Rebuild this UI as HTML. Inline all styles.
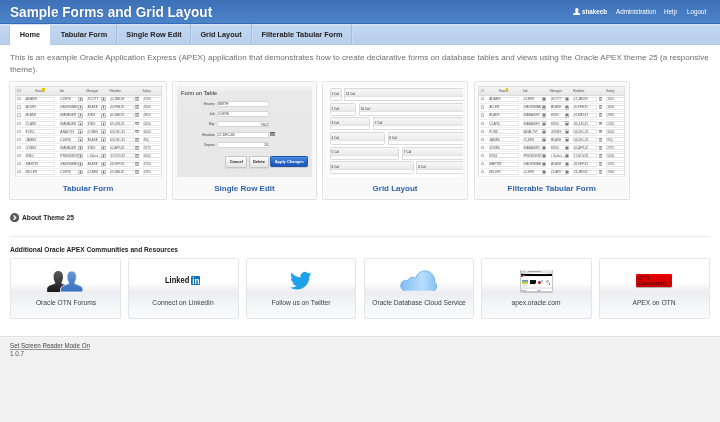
<!DOCTYPE html>
<html><head><meta charset="utf-8"><style>
html,body{margin:0;padding:0;width:720px;height:422px;overflow:hidden;background:#fff;}
body{position:relative;font-family:"Liberation Sans",sans-serif;}
.t{position:absolute;white-space:nowrap;}
.r{position:absolute;}
#w{position:absolute;left:0;top:0;width:720px;height:422px;will-change:transform;}
</style></head><body>
<div id="w"><div class="r" style="left:0px;top:0px;width:720px;height:23px;background:linear-gradient(#3d71b7,#4c83c9);"></div>
<div class="r" style="left:0px;top:23px;width:720px;height:1px;background:#356ab6;"></div>
<div class="t" style="left:10.00px;top:5px;font-size:14.5px;line-height:14.5px;color:#fff;font-weight:700;transform:scaleX(0.94);transform-origin:0 0;text-shadow:0 0 1px rgba(20,60,130,0.9);">Sample Forms and Grid Layout</div>
<svg class="r" style="left:572.7px;top:7.7px" width="7.7" height="7.6" viewBox="0 0 22.4 21" preserveAspectRatio="none"><path d="M11.2 0 C14.5 0 15.9 2.6 15.9 5.6 C15.9 7.6 15.5 9.2 14.9 10.4 C14.4 11.4 14.1 12 14.2 12.6 C17.4 13.6 22.4 15.2 22.4 18.2 L22.4 21 L0 21 L0 18.2 C0 15.2 5 13.6 8.2 12.6 C8.3 12 8 11.4 7.5 10.4 C6.9 9.2 6.5 7.6 6.5 5.6 C6.5 2.6 7.9 0 11.2 0 Z" fill="#fff"/></svg>
<div class="t" style="left:582.20px;top:8px;font-size:7px;line-height:7px;color:#fff;font-weight:700;transform:scaleX(0.89);transform-origin:0 0;">shakeeb</div>
<div class="t" style="left:616.00px;top:8px;font-size:7px;line-height:7px;color:#fff;font-weight:400;transform:scaleX(0.9);transform-origin:0 0;">Administration</div>
<div class="t" style="left:664.40px;top:8px;font-size:7px;line-height:7px;color:#fff;font-weight:400;transform:scaleX(0.9);transform-origin:0 0;">Help</div>
<div class="t" style="left:686.70px;top:8px;font-size:7px;line-height:7px;color:#fff;font-weight:400;transform:scaleX(0.9);transform-origin:0 0;">Logout</div>
<div class="r" style="left:0px;top:24px;width:720px;height:21px;background:linear-gradient(#d5e3f5 0,#d5e3f5 1px,#c2d6ef 2px,#b9cfeb 93%,#aec4e5 100%);"></div>
<div class="r" style="left:9px;top:25px;width:41px;height:20px;background:#fff;border-left:1px solid #afc4e3;box-sizing:border-box;"></div>
<div class="t" style="left:-70.00px;width:200px;text-align:center;top:31px;font-size:7.7px;line-height:7.7px;color:#222;font-weight:700;transform:scaleX(0.955);transform-origin:50% 0;">Home</div>
<div class="r" style="left:116px;top:24px;width:1px;height:20px;background:#a6bddd;"></div>
<div class="r" style="left:117px;top:25px;width:1px;height:19px;background:#c9dbf2;"></div>
<div class="t" style="left:-16.50px;width:200px;text-align:center;top:31px;font-size:7.7px;line-height:7.7px;color:#222;font-weight:700;transform:scaleX(0.955);transform-origin:50% 0;">Tabular Form</div>
<div class="r" style="left:190px;top:24px;width:1px;height:20px;background:#a6bddd;"></div>
<div class="r" style="left:191px;top:25px;width:1px;height:19px;background:#c9dbf2;"></div>
<div class="t" style="left:53.50px;width:200px;text-align:center;top:31px;font-size:7.7px;line-height:7.7px;color:#222;font-weight:700;transform:scaleX(0.955);transform-origin:50% 0;">Single Row Edit</div>
<div class="r" style="left:251px;top:24px;width:1px;height:20px;background:#a6bddd;"></div>
<div class="r" style="left:252px;top:25px;width:1px;height:19px;background:#c9dbf2;"></div>
<div class="t" style="left:121.00px;width:200px;text-align:center;top:31px;font-size:7.7px;line-height:7.7px;color:#222;font-weight:700;transform:scaleX(0.955);transform-origin:50% 0;">Grid Layout</div>
<div class="r" style="left:351px;top:24px;width:1px;height:20px;background:#a6bddd;"></div>
<div class="r" style="left:352px;top:25px;width:1px;height:19px;background:#c9dbf2;"></div>
<div class="t" style="left:201.50px;width:200px;text-align:center;top:31px;font-size:7.7px;line-height:7.7px;color:#222;font-weight:700;transform:scaleX(0.955);transform-origin:50% 0;">Filterable Tabular Form</div>
<div class="t" style="white-space:normal;left:10px;top:52px;width:705px;font-size:8.1px;line-height:11.6px;color:#6e6e6e;">This is an example Oracle Application Express (APEX) application that demonstrates how to create declarative forms on database tables and views using the Oracle APEX theme 25 (a responsive theme).</div>
<div class="r" style="left:9px;top:81px;width:158px;height:119px;background:#f9f9f9;border:1px solid #e2e2e2;border-radius:2px;box-sizing:border-box;box-shadow:inset 0 0 0 1px #fdfdfd;"></div>
<div class="t" style="left:-12.00px;width:200px;text-align:center;top:185px;font-size:8px;line-height:8px;color:#2f63ad;font-weight:700;">Tabular Form</div>
<div class="r" style="left:172px;top:81px;width:145px;height:119px;background:#f9f9f9;border:1px solid #e2e2e2;border-radius:2px;box-sizing:border-box;box-shadow:inset 0 0 0 1px #fdfdfd;"></div>
<div class="t" style="left:144.50px;width:200px;text-align:center;top:185px;font-size:8px;line-height:8px;color:#2f63ad;font-weight:700;">Single Row Edit</div>
<div class="r" style="left:322px;top:81px;width:146px;height:119px;background:#f9f9f9;border:1px solid #e2e2e2;border-radius:2px;box-sizing:border-box;box-shadow:inset 0 0 0 1px #fdfdfd;"></div>
<div class="t" style="left:295.00px;width:200px;text-align:center;top:185px;font-size:8px;line-height:8px;color:#2f63ad;font-weight:700;">Grid Layout</div>
<div class="r" style="left:473.5px;top:81px;width:156.5px;height:119px;background:#f9f9f9;border:1px solid #e2e2e2;border-radius:2px;box-sizing:border-box;box-shadow:inset 0 0 0 1px #fdfdfd;"></div>
<div class="t" style="left:451.75px;width:200px;text-align:center;top:185px;font-size:8px;line-height:8px;color:#2f63ad;font-weight:700;">Filterable Tabular Form</div>
<div class="r" style="left:14.7px;top:86px;width:147.3px;height:90.6px;background:#fff;border:1px solid #e2e2e2;box-sizing:border-box;"></div>
<div class="r" style="left:15.7px;top:87px;width:145.3px;height:7.8px;background:linear-gradient(#f2f2f2,#e8e8e8);border-bottom:0.6px solid #dcdcdc;"></div>
<div class="r" style="left:17.4px;top:88.8px;width:3.5px;height:3.2px;background:linear-gradient(#fff,#eee);border:0.7px solid #c2c2c2;border-radius:0.6px;box-sizing:border-box;"></div>
<div class="t" style="left:35.40px;top:90px;font-size:3px;line-height:3px;color:#555;font-weight:400;">Ename</div>
<div class="t" style="left:59.20px;top:90px;font-size:3px;line-height:3px;color:#555;font-weight:400;">Job</div>
<div class="t" style="left:86.50px;top:90px;font-size:3px;line-height:3px;color:#555;font-weight:400;">Manager</div>
<div class="t" style="left:109.50px;top:90px;font-size:3px;line-height:3px;color:#555;font-weight:400;">Hiredate</div>
<div class="t" style="left:142.50px;top:90px;font-size:3px;line-height:3px;color:#555;font-weight:400;">Salary</div>
<div class="r" style="left:42.0px;top:88px;width:2.5px;height:2.5px;background:#e8c400;"></div>
<div class="r" style="left:15.7px;top:102.7px;width:145.3px;height:0.8px;background:#efefef;"></div>
<div class="r" style="left:17.4px;top:97.19999999999999px;width:3.5px;height:3.2px;background:linear-gradient(#fff,#eee);border:0.7px solid #c2c2c2;border-radius:0.6px;box-sizing:border-box;"></div>
<div class="r" style="left:25.0px;top:96.6px;width:30px;height:5px;background:#fff;border:0.6px solid #e4e4e4;box-sizing:border-box;"></div>
<div class="t" style="left:26.00px;top:98px;font-size:3.1px;line-height:3.1px;color:#555;font-weight:400;">ADAMS</div>
<div class="r" style="left:59.8px;top:96.6px;width:23px;height:5px;background:#fff;border:0.6px solid #e4e4e4;box-sizing:border-box;"></div>
<div class="t" style="left:60.60px;top:98px;font-size:3.1px;line-height:3.1px;color:#555;font-weight:400;">CLERK</div>
<div class="r" style="left:78.4px;top:96.8px;width:4.3px;height:4.6px;background:linear-gradient(#fafafa,#e6e6e6);border:0.6px solid #b8b8b8;border-radius:1px;box-sizing:border-box;"></div>
<div class="r" style="left:79.95px;top:98.19999999999999px;width:1.2px;height:2px;background:#7a7a7a;"></div>
<div class="r" style="left:87.0px;top:96.6px;width:18.7px;height:5px;background:#fff;border:0.6px solid #e4e4e4;box-sizing:border-box;"></div>
<div class="t" style="left:87.80px;top:98px;font-size:3.1px;line-height:3.1px;color:#555;font-weight:400;">SCOTT</div>
<div class="r" style="left:101.4px;top:96.8px;width:4.3px;height:4.6px;background:linear-gradient(#fafafa,#e6e6e6);border:0.6px solid #b8b8b8;border-radius:1px;box-sizing:border-box;"></div>
<div class="r" style="left:102.95px;top:98.19999999999999px;width:1.2px;height:2px;background:#7a7a7a;"></div>
<div class="r" style="left:109.5px;top:96.6px;width:24.3px;height:5px;background:#fff;border:0.6px solid #e4e4e4;box-sizing:border-box;"></div>
<div class="t" style="left:110.40px;top:98px;font-size:2.9px;line-height:2.9px;color:#555;font-weight:400;">12-JAN-83</div>
<div class="r" style="left:135.3px;top:97.19999999999999px;width:3.6px;height:3.8px;background:linear-gradient(#888 0,#888 35%,#ccc 36%,#aaa);"></div>
<div class="r" style="left:142.9px;top:96.6px;width:18.9px;height:5px;background:#fff;border:0.6px solid #e4e4e4;box-sizing:border-box;"></div>
<div class="t" style="left:143.80px;top:98px;font-size:3.1px;line-height:3.1px;color:#555;font-weight:400;">1100</div>
<div class="r" style="left:15.7px;top:110.82px;width:145.3px;height:0.8px;background:#efefef;"></div>
<div class="r" style="left:17.4px;top:105.32px;width:3.5px;height:3.2px;background:linear-gradient(#fff,#eee);border:0.7px solid #c2c2c2;border-radius:0.6px;box-sizing:border-box;"></div>
<div class="r" style="left:25.0px;top:104.72px;width:30px;height:5px;background:#fff;border:0.6px solid #e4e4e4;box-sizing:border-box;"></div>
<div class="t" style="left:26.00px;top:106px;font-size:3.1px;line-height:3.1px;color:#555;font-weight:400;">ALLEN</div>
<div class="r" style="left:59.8px;top:104.72px;width:23px;height:5px;background:#fff;border:0.6px solid #e4e4e4;box-sizing:border-box;"></div>
<div class="t" style="left:60.60px;top:106px;font-size:3.1px;line-height:3.1px;color:#555;font-weight:400;">SALESMAN</div>
<div class="r" style="left:78.4px;top:104.92px;width:4.3px;height:4.6px;background:linear-gradient(#fafafa,#e6e6e6);border:0.6px solid #b8b8b8;border-radius:1px;box-sizing:border-box;"></div>
<div class="r" style="left:79.95px;top:106.32px;width:1.2px;height:2px;background:#7a7a7a;"></div>
<div class="r" style="left:87.0px;top:104.72px;width:18.7px;height:5px;background:#fff;border:0.6px solid #e4e4e4;box-sizing:border-box;"></div>
<div class="t" style="left:87.80px;top:106px;font-size:3.1px;line-height:3.1px;color:#555;font-weight:400;">BLAKE</div>
<div class="r" style="left:101.4px;top:104.92px;width:4.3px;height:4.6px;background:linear-gradient(#fafafa,#e6e6e6);border:0.6px solid #b8b8b8;border-radius:1px;box-sizing:border-box;"></div>
<div class="r" style="left:102.95px;top:106.32px;width:1.2px;height:2px;background:#7a7a7a;"></div>
<div class="r" style="left:109.5px;top:104.72px;width:24.3px;height:5px;background:#fff;border:0.6px solid #e4e4e4;box-sizing:border-box;"></div>
<div class="t" style="left:110.40px;top:106px;font-size:2.9px;line-height:2.9px;color:#555;font-weight:400;">20-FEB-81</div>
<div class="r" style="left:135.3px;top:105.32px;width:3.6px;height:3.8px;background:linear-gradient(#888 0,#888 35%,#ccc 36%,#aaa);"></div>
<div class="r" style="left:142.9px;top:104.72px;width:18.9px;height:5px;background:#fff;border:0.6px solid #e4e4e4;box-sizing:border-box;"></div>
<div class="t" style="left:143.80px;top:106px;font-size:3.1px;line-height:3.1px;color:#555;font-weight:400;">1600</div>
<div class="r" style="left:15.7px;top:118.94px;width:145.3px;height:0.8px;background:#efefef;"></div>
<div class="r" style="left:17.4px;top:113.43999999999998px;width:3.5px;height:3.2px;background:linear-gradient(#fff,#eee);border:0.7px solid #c2c2c2;border-radius:0.6px;box-sizing:border-box;"></div>
<div class="r" style="left:25.0px;top:112.83999999999999px;width:30px;height:5px;background:#fff;border:0.6px solid #e4e4e4;box-sizing:border-box;"></div>
<div class="t" style="left:26.00px;top:114px;font-size:3.1px;line-height:3.1px;color:#555;font-weight:400;">BLAKE</div>
<div class="r" style="left:59.8px;top:112.83999999999999px;width:23px;height:5px;background:#fff;border:0.6px solid #e4e4e4;box-sizing:border-box;"></div>
<div class="t" style="left:60.60px;top:114px;font-size:3.1px;line-height:3.1px;color:#555;font-weight:400;">MANAGER</div>
<div class="r" style="left:78.4px;top:113.03999999999999px;width:4.3px;height:4.6px;background:linear-gradient(#fafafa,#e6e6e6);border:0.6px solid #b8b8b8;border-radius:1px;box-sizing:border-box;"></div>
<div class="r" style="left:79.95px;top:114.43999999999998px;width:1.2px;height:2px;background:#7a7a7a;"></div>
<div class="r" style="left:87.0px;top:112.83999999999999px;width:18.7px;height:5px;background:#fff;border:0.6px solid #e4e4e4;box-sizing:border-box;"></div>
<div class="t" style="left:87.80px;top:114px;font-size:3.1px;line-height:3.1px;color:#555;font-weight:400;">KING</div>
<div class="r" style="left:101.4px;top:113.03999999999999px;width:4.3px;height:4.6px;background:linear-gradient(#fafafa,#e6e6e6);border:0.6px solid #b8b8b8;border-radius:1px;box-sizing:border-box;"></div>
<div class="r" style="left:102.95px;top:114.43999999999998px;width:1.2px;height:2px;background:#7a7a7a;"></div>
<div class="r" style="left:109.5px;top:112.83999999999999px;width:24.3px;height:5px;background:#fff;border:0.6px solid #e4e4e4;box-sizing:border-box;"></div>
<div class="t" style="left:110.40px;top:114px;font-size:2.9px;line-height:2.9px;color:#555;font-weight:400;">01-MAY-81</div>
<div class="r" style="left:135.3px;top:113.43999999999998px;width:3.6px;height:3.8px;background:linear-gradient(#888 0,#888 35%,#ccc 36%,#aaa);"></div>
<div class="r" style="left:142.9px;top:112.83999999999999px;width:18.9px;height:5px;background:#fff;border:0.6px solid #e4e4e4;box-sizing:border-box;"></div>
<div class="t" style="left:143.80px;top:114px;font-size:3.1px;line-height:3.1px;color:#555;font-weight:400;">2850</div>
<div class="r" style="left:15.7px;top:127.06px;width:145.3px;height:0.8px;background:#efefef;"></div>
<div class="r" style="left:17.4px;top:121.55999999999999px;width:3.5px;height:3.2px;background:linear-gradient(#fff,#eee);border:0.7px solid #c2c2c2;border-radius:0.6px;box-sizing:border-box;"></div>
<div class="r" style="left:25.0px;top:120.96px;width:30px;height:5px;background:#fff;border:0.6px solid #e4e4e4;box-sizing:border-box;"></div>
<div class="t" style="left:26.00px;top:123px;font-size:3.1px;line-height:3.1px;color:#555;font-weight:400;">CLARK</div>
<div class="r" style="left:59.8px;top:120.96px;width:23px;height:5px;background:#fff;border:0.6px solid #e4e4e4;box-sizing:border-box;"></div>
<div class="t" style="left:60.60px;top:123px;font-size:3.1px;line-height:3.1px;color:#555;font-weight:400;">MANAGER</div>
<div class="r" style="left:78.4px;top:121.16px;width:4.3px;height:4.6px;background:linear-gradient(#fafafa,#e6e6e6);border:0.6px solid #b8b8b8;border-radius:1px;box-sizing:border-box;"></div>
<div class="r" style="left:79.95px;top:122.55999999999999px;width:1.2px;height:2px;background:#7a7a7a;"></div>
<div class="r" style="left:87.0px;top:120.96px;width:18.7px;height:5px;background:#fff;border:0.6px solid #e4e4e4;box-sizing:border-box;"></div>
<div class="t" style="left:87.80px;top:123px;font-size:3.1px;line-height:3.1px;color:#555;font-weight:400;">KING</div>
<div class="r" style="left:101.4px;top:121.16px;width:4.3px;height:4.6px;background:linear-gradient(#fafafa,#e6e6e6);border:0.6px solid #b8b8b8;border-radius:1px;box-sizing:border-box;"></div>
<div class="r" style="left:102.95px;top:122.55999999999999px;width:1.2px;height:2px;background:#7a7a7a;"></div>
<div class="r" style="left:109.5px;top:120.96px;width:24.3px;height:5px;background:#fff;border:0.6px solid #e4e4e4;box-sizing:border-box;"></div>
<div class="t" style="left:110.40px;top:123px;font-size:2.9px;line-height:2.9px;color:#555;font-weight:400;">09-JUN-81</div>
<div class="r" style="left:135.3px;top:121.55999999999999px;width:3.6px;height:3.8px;background:linear-gradient(#888 0,#888 35%,#ccc 36%,#aaa);"></div>
<div class="r" style="left:142.9px;top:120.96px;width:18.9px;height:5px;background:#fff;border:0.6px solid #e4e4e4;box-sizing:border-box;"></div>
<div class="t" style="left:143.80px;top:123px;font-size:3.1px;line-height:3.1px;color:#555;font-weight:400;">2450</div>
<div class="r" style="left:15.7px;top:135.18px;width:145.3px;height:0.8px;background:#efefef;"></div>
<div class="r" style="left:17.4px;top:129.67999999999998px;width:3.5px;height:3.2px;background:linear-gradient(#fff,#eee);border:0.7px solid #c2c2c2;border-radius:0.6px;box-sizing:border-box;"></div>
<div class="r" style="left:25.0px;top:129.07999999999998px;width:30px;height:5px;background:#fff;border:0.6px solid #e4e4e4;box-sizing:border-box;"></div>
<div class="t" style="left:26.00px;top:131px;font-size:3.1px;line-height:3.1px;color:#555;font-weight:400;">FORD</div>
<div class="r" style="left:59.8px;top:129.07999999999998px;width:23px;height:5px;background:#fff;border:0.6px solid #e4e4e4;box-sizing:border-box;"></div>
<div class="t" style="left:60.60px;top:131px;font-size:3.1px;line-height:3.1px;color:#555;font-weight:400;">ANALYST</div>
<div class="r" style="left:78.4px;top:129.27999999999997px;width:4.3px;height:4.6px;background:linear-gradient(#fafafa,#e6e6e6);border:0.6px solid #b8b8b8;border-radius:1px;box-sizing:border-box;"></div>
<div class="r" style="left:79.95px;top:130.67999999999998px;width:1.2px;height:2px;background:#7a7a7a;"></div>
<div class="r" style="left:87.0px;top:129.07999999999998px;width:18.7px;height:5px;background:#fff;border:0.6px solid #e4e4e4;box-sizing:border-box;"></div>
<div class="t" style="left:87.80px;top:131px;font-size:3.1px;line-height:3.1px;color:#555;font-weight:400;">JONES</div>
<div class="r" style="left:101.4px;top:129.27999999999997px;width:4.3px;height:4.6px;background:linear-gradient(#fafafa,#e6e6e6);border:0.6px solid #b8b8b8;border-radius:1px;box-sizing:border-box;"></div>
<div class="r" style="left:102.95px;top:130.67999999999998px;width:1.2px;height:2px;background:#7a7a7a;"></div>
<div class="r" style="left:109.5px;top:129.07999999999998px;width:24.3px;height:5px;background:#fff;border:0.6px solid #e4e4e4;box-sizing:border-box;"></div>
<div class="t" style="left:110.40px;top:131px;font-size:2.9px;line-height:2.9px;color:#555;font-weight:400;">03-DEC-81</div>
<div class="r" style="left:135.3px;top:129.67999999999998px;width:3.6px;height:3.8px;background:linear-gradient(#888 0,#888 35%,#ccc 36%,#aaa);"></div>
<div class="r" style="left:142.9px;top:129.07999999999998px;width:18.9px;height:5px;background:#fff;border:0.6px solid #e4e4e4;box-sizing:border-box;"></div>
<div class="t" style="left:143.80px;top:131px;font-size:3.1px;line-height:3.1px;color:#555;font-weight:400;">3000</div>
<div class="r" style="left:15.7px;top:143.3px;width:145.3px;height:0.8px;background:#efefef;"></div>
<div class="r" style="left:17.4px;top:137.79999999999998px;width:3.5px;height:3.2px;background:linear-gradient(#fff,#eee);border:0.7px solid #c2c2c2;border-radius:0.6px;box-sizing:border-box;"></div>
<div class="r" style="left:25.0px;top:137.2px;width:30px;height:5px;background:#fff;border:0.6px solid #e4e4e4;box-sizing:border-box;"></div>
<div class="t" style="left:26.00px;top:139px;font-size:3.1px;line-height:3.1px;color:#555;font-weight:400;">JAMES</div>
<div class="r" style="left:59.8px;top:137.2px;width:23px;height:5px;background:#fff;border:0.6px solid #e4e4e4;box-sizing:border-box;"></div>
<div class="t" style="left:60.60px;top:139px;font-size:3.1px;line-height:3.1px;color:#555;font-weight:400;">CLERK</div>
<div class="r" style="left:78.4px;top:137.39999999999998px;width:4.3px;height:4.6px;background:linear-gradient(#fafafa,#e6e6e6);border:0.6px solid #b8b8b8;border-radius:1px;box-sizing:border-box;"></div>
<div class="r" style="left:79.95px;top:138.79999999999998px;width:1.2px;height:2px;background:#7a7a7a;"></div>
<div class="r" style="left:87.0px;top:137.2px;width:18.7px;height:5px;background:#fff;border:0.6px solid #e4e4e4;box-sizing:border-box;"></div>
<div class="t" style="left:87.80px;top:139px;font-size:3.1px;line-height:3.1px;color:#555;font-weight:400;">BLAKE</div>
<div class="r" style="left:101.4px;top:137.39999999999998px;width:4.3px;height:4.6px;background:linear-gradient(#fafafa,#e6e6e6);border:0.6px solid #b8b8b8;border-radius:1px;box-sizing:border-box;"></div>
<div class="r" style="left:102.95px;top:138.79999999999998px;width:1.2px;height:2px;background:#7a7a7a;"></div>
<div class="r" style="left:109.5px;top:137.2px;width:24.3px;height:5px;background:#fff;border:0.6px solid #e4e4e4;box-sizing:border-box;"></div>
<div class="t" style="left:110.40px;top:139px;font-size:2.9px;line-height:2.9px;color:#555;font-weight:400;">03-DEC-81</div>
<div class="r" style="left:135.3px;top:137.79999999999998px;width:3.6px;height:3.8px;background:linear-gradient(#888 0,#888 35%,#ccc 36%,#aaa);"></div>
<div class="r" style="left:142.9px;top:137.2px;width:18.9px;height:5px;background:#fff;border:0.6px solid #e4e4e4;box-sizing:border-box;"></div>
<div class="t" style="left:143.80px;top:139px;font-size:3.1px;line-height:3.1px;color:#555;font-weight:400;">950</div>
<div class="r" style="left:15.7px;top:151.42px;width:145.3px;height:0.8px;background:#efefef;"></div>
<div class="r" style="left:17.4px;top:145.92px;width:3.5px;height:3.2px;background:linear-gradient(#fff,#eee);border:0.7px solid #c2c2c2;border-radius:0.6px;box-sizing:border-box;"></div>
<div class="r" style="left:25.0px;top:145.32px;width:30px;height:5px;background:#fff;border:0.6px solid #e4e4e4;box-sizing:border-box;"></div>
<div class="t" style="left:26.00px;top:147px;font-size:3.1px;line-height:3.1px;color:#555;font-weight:400;">JONES</div>
<div class="r" style="left:59.8px;top:145.32px;width:23px;height:5px;background:#fff;border:0.6px solid #e4e4e4;box-sizing:border-box;"></div>
<div class="t" style="left:60.60px;top:147px;font-size:3.1px;line-height:3.1px;color:#555;font-weight:400;">MANAGER</div>
<div class="r" style="left:78.4px;top:145.51999999999998px;width:4.3px;height:4.6px;background:linear-gradient(#fafafa,#e6e6e6);border:0.6px solid #b8b8b8;border-radius:1px;box-sizing:border-box;"></div>
<div class="r" style="left:79.95px;top:146.92px;width:1.2px;height:2px;background:#7a7a7a;"></div>
<div class="r" style="left:87.0px;top:145.32px;width:18.7px;height:5px;background:#fff;border:0.6px solid #e4e4e4;box-sizing:border-box;"></div>
<div class="t" style="left:87.80px;top:147px;font-size:3.1px;line-height:3.1px;color:#555;font-weight:400;">KING</div>
<div class="r" style="left:101.4px;top:145.51999999999998px;width:4.3px;height:4.6px;background:linear-gradient(#fafafa,#e6e6e6);border:0.6px solid #b8b8b8;border-radius:1px;box-sizing:border-box;"></div>
<div class="r" style="left:102.95px;top:146.92px;width:1.2px;height:2px;background:#7a7a7a;"></div>
<div class="r" style="left:109.5px;top:145.32px;width:24.3px;height:5px;background:#fff;border:0.6px solid #e4e4e4;box-sizing:border-box;"></div>
<div class="t" style="left:110.40px;top:147px;font-size:2.9px;line-height:2.9px;color:#555;font-weight:400;">02-APR-81</div>
<div class="r" style="left:135.3px;top:145.92px;width:3.6px;height:3.8px;background:linear-gradient(#888 0,#888 35%,#ccc 36%,#aaa);"></div>
<div class="r" style="left:142.9px;top:145.32px;width:18.9px;height:5px;background:#fff;border:0.6px solid #e4e4e4;box-sizing:border-box;"></div>
<div class="t" style="left:143.80px;top:147px;font-size:3.1px;line-height:3.1px;color:#555;font-weight:400;">2975</div>
<div class="r" style="left:15.7px;top:159.54px;width:145.3px;height:0.8px;background:#efefef;"></div>
<div class="r" style="left:17.4px;top:154.04px;width:3.5px;height:3.2px;background:linear-gradient(#fff,#eee);border:0.7px solid #c2c2c2;border-radius:0.6px;box-sizing:border-box;"></div>
<div class="r" style="left:25.0px;top:153.44px;width:30px;height:5px;background:#fff;border:0.6px solid #e4e4e4;box-sizing:border-box;"></div>
<div class="t" style="left:26.00px;top:155px;font-size:3.1px;line-height:3.1px;color:#555;font-weight:400;">KING</div>
<div class="r" style="left:59.8px;top:153.44px;width:23px;height:5px;background:#fff;border:0.6px solid #e4e4e4;box-sizing:border-box;"></div>
<div class="t" style="left:60.60px;top:155px;font-size:3.1px;line-height:3.1px;color:#555;font-weight:400;">PRESIDENT</div>
<div class="r" style="left:78.4px;top:153.64px;width:4.3px;height:4.6px;background:linear-gradient(#fafafa,#e6e6e6);border:0.6px solid #b8b8b8;border-radius:1px;box-sizing:border-box;"></div>
<div class="r" style="left:79.95px;top:155.04px;width:1.2px;height:2px;background:#7a7a7a;"></div>
<div class="r" style="left:87.0px;top:153.44px;width:18.7px;height:5px;background:#fff;border:0.6px solid #e4e4e4;box-sizing:border-box;"></div>
<div class="t" style="left:87.80px;top:155px;font-size:3.1px;line-height:3.1px;color:#555;font-weight:400;">- Select -</div>
<div class="r" style="left:101.4px;top:153.64px;width:4.3px;height:4.6px;background:linear-gradient(#fafafa,#e6e6e6);border:0.6px solid #b8b8b8;border-radius:1px;box-sizing:border-box;"></div>
<div class="r" style="left:102.95px;top:155.04px;width:1.2px;height:2px;background:#7a7a7a;"></div>
<div class="r" style="left:109.5px;top:153.44px;width:24.3px;height:5px;background:#fff;border:0.6px solid #e4e4e4;box-sizing:border-box;"></div>
<div class="t" style="left:110.40px;top:155px;font-size:2.9px;line-height:2.9px;color:#555;font-weight:400;">17-NOV-81</div>
<div class="r" style="left:135.3px;top:154.04px;width:3.6px;height:3.8px;background:linear-gradient(#888 0,#888 35%,#ccc 36%,#aaa);"></div>
<div class="r" style="left:142.9px;top:153.44px;width:18.9px;height:5px;background:#fff;border:0.6px solid #e4e4e4;box-sizing:border-box;"></div>
<div class="t" style="left:143.80px;top:155px;font-size:3.1px;line-height:3.1px;color:#555;font-weight:400;">5000</div>
<div class="r" style="left:15.7px;top:167.66px;width:145.3px;height:0.8px;background:#efefef;"></div>
<div class="r" style="left:17.4px;top:162.16px;width:3.5px;height:3.2px;background:linear-gradient(#fff,#eee);border:0.7px solid #c2c2c2;border-radius:0.6px;box-sizing:border-box;"></div>
<div class="r" style="left:25.0px;top:161.56px;width:30px;height:5px;background:#fff;border:0.6px solid #e4e4e4;box-sizing:border-box;"></div>
<div class="t" style="left:26.00px;top:163px;font-size:3.1px;line-height:3.1px;color:#555;font-weight:400;">MARTIN</div>
<div class="r" style="left:59.8px;top:161.56px;width:23px;height:5px;background:#fff;border:0.6px solid #e4e4e4;box-sizing:border-box;"></div>
<div class="t" style="left:60.60px;top:163px;font-size:3.1px;line-height:3.1px;color:#555;font-weight:400;">SALESMAN</div>
<div class="r" style="left:78.4px;top:161.76px;width:4.3px;height:4.6px;background:linear-gradient(#fafafa,#e6e6e6);border:0.6px solid #b8b8b8;border-radius:1px;box-sizing:border-box;"></div>
<div class="r" style="left:79.95px;top:163.16px;width:1.2px;height:2px;background:#7a7a7a;"></div>
<div class="r" style="left:87.0px;top:161.56px;width:18.7px;height:5px;background:#fff;border:0.6px solid #e4e4e4;box-sizing:border-box;"></div>
<div class="t" style="left:87.80px;top:163px;font-size:3.1px;line-height:3.1px;color:#555;font-weight:400;">BLAKE</div>
<div class="r" style="left:101.4px;top:161.76px;width:4.3px;height:4.6px;background:linear-gradient(#fafafa,#e6e6e6);border:0.6px solid #b8b8b8;border-radius:1px;box-sizing:border-box;"></div>
<div class="r" style="left:102.95px;top:163.16px;width:1.2px;height:2px;background:#7a7a7a;"></div>
<div class="r" style="left:109.5px;top:161.56px;width:24.3px;height:5px;background:#fff;border:0.6px solid #e4e4e4;box-sizing:border-box;"></div>
<div class="t" style="left:110.40px;top:163px;font-size:2.9px;line-height:2.9px;color:#555;font-weight:400;">28-SEP-81</div>
<div class="r" style="left:135.3px;top:162.16px;width:3.6px;height:3.8px;background:linear-gradient(#888 0,#888 35%,#ccc 36%,#aaa);"></div>
<div class="r" style="left:142.9px;top:161.56px;width:18.9px;height:5px;background:#fff;border:0.6px solid #e4e4e4;box-sizing:border-box;"></div>
<div class="t" style="left:143.80px;top:163px;font-size:3.1px;line-height:3.1px;color:#555;font-weight:400;">1250</div>
<div class="r" style="left:15.7px;top:175.78px;width:145.3px;height:0.8px;background:#efefef;"></div>
<div class="r" style="left:17.4px;top:170.28px;width:3.5px;height:3.2px;background:linear-gradient(#fff,#eee);border:0.7px solid #c2c2c2;border-radius:0.6px;box-sizing:border-box;"></div>
<div class="r" style="left:25.0px;top:169.68px;width:30px;height:5px;background:#fff;border:0.6px solid #e4e4e4;box-sizing:border-box;"></div>
<div class="t" style="left:26.00px;top:171px;font-size:3.1px;line-height:3.1px;color:#555;font-weight:400;">MILLER</div>
<div class="r" style="left:59.8px;top:169.68px;width:23px;height:5px;background:#fff;border:0.6px solid #e4e4e4;box-sizing:border-box;"></div>
<div class="t" style="left:60.60px;top:171px;font-size:3.1px;line-height:3.1px;color:#555;font-weight:400;">CLERK</div>
<div class="r" style="left:78.4px;top:169.88px;width:4.3px;height:4.6px;background:linear-gradient(#fafafa,#e6e6e6);border:0.6px solid #b8b8b8;border-radius:1px;box-sizing:border-box;"></div>
<div class="r" style="left:79.95px;top:171.28px;width:1.2px;height:2px;background:#7a7a7a;"></div>
<div class="r" style="left:87.0px;top:169.68px;width:18.7px;height:5px;background:#fff;border:0.6px solid #e4e4e4;box-sizing:border-box;"></div>
<div class="t" style="left:87.80px;top:171px;font-size:3.1px;line-height:3.1px;color:#555;font-weight:400;">CLARK</div>
<div class="r" style="left:101.4px;top:169.88px;width:4.3px;height:4.6px;background:linear-gradient(#fafafa,#e6e6e6);border:0.6px solid #b8b8b8;border-radius:1px;box-sizing:border-box;"></div>
<div class="r" style="left:102.95px;top:171.28px;width:1.2px;height:2px;background:#7a7a7a;"></div>
<div class="r" style="left:109.5px;top:169.68px;width:24.3px;height:5px;background:#fff;border:0.6px solid #e4e4e4;box-sizing:border-box;"></div>
<div class="t" style="left:110.40px;top:171px;font-size:2.9px;line-height:2.9px;color:#555;font-weight:400;">23-JAN-82</div>
<div class="r" style="left:135.3px;top:170.28px;width:3.6px;height:3.8px;background:linear-gradient(#888 0,#888 35%,#ccc 36%,#aaa);"></div>
<div class="r" style="left:142.9px;top:169.68px;width:18.9px;height:5px;background:#fff;border:0.6px solid #e4e4e4;box-sizing:border-box;"></div>
<div class="t" style="left:143.80px;top:171px;font-size:3.1px;line-height:3.1px;color:#555;font-weight:400;">1300</div>
<div class="r" style="left:478.2px;top:86px;width:147.3px;height:90.6px;background:#fff;border:1px solid #e2e2e2;box-sizing:border-box;"></div>
<div class="r" style="left:479.2px;top:87px;width:145.3px;height:7.8px;background:linear-gradient(#f2f2f2,#e8e8e8);border-bottom:0.6px solid #dcdcdc;"></div>
<div class="r" style="left:480.9px;top:88.8px;width:3.5px;height:3.2px;background:linear-gradient(#fff,#eee);border:0.7px solid #c2c2c2;border-radius:0.6px;box-sizing:border-box;"></div>
<div class="t" style="left:498.90px;top:90px;font-size:3px;line-height:3px;color:#555;font-weight:400;">Ename</div>
<div class="t" style="left:522.70px;top:90px;font-size:3px;line-height:3px;color:#555;font-weight:400;">Job</div>
<div class="t" style="left:550.00px;top:90px;font-size:3px;line-height:3px;color:#555;font-weight:400;">Manager</div>
<div class="t" style="left:573.00px;top:90px;font-size:3px;line-height:3px;color:#555;font-weight:400;">Hiredate</div>
<div class="t" style="left:606.00px;top:90px;font-size:3px;line-height:3px;color:#555;font-weight:400;">Salary</div>
<div class="r" style="left:505.5px;top:88px;width:2.5px;height:2.5px;background:#e8c400;"></div>
<div class="r" style="left:479.2px;top:102.7px;width:145.3px;height:0.8px;background:#efefef;"></div>
<div class="r" style="left:480.9px;top:97.19999999999999px;width:3.5px;height:3.2px;background:linear-gradient(#fff,#eee);border:0.7px solid #c2c2c2;border-radius:0.6px;box-sizing:border-box;"></div>
<div class="r" style="left:488.5px;top:96.6px;width:30px;height:5px;background:#fff;border:0.6px solid #e4e4e4;box-sizing:border-box;"></div>
<div class="t" style="left:489.50px;top:98px;font-size:3.1px;line-height:3.1px;color:#555;font-weight:400;">ADAMS</div>
<div class="r" style="left:523.3px;top:96.6px;width:23px;height:5px;background:#fff;border:0.6px solid #e4e4e4;box-sizing:border-box;"></div>
<div class="t" style="left:524.10px;top:98px;font-size:3.1px;line-height:3.1px;color:#555;font-weight:400;">CLERK</div>
<div class="r" style="left:541.9px;top:96.8px;width:4.3px;height:4.6px;background:linear-gradient(#fafafa,#e6e6e6);border:0.6px solid #b8b8b8;border-radius:1px;box-sizing:border-box;"></div>
<div class="r" style="left:543.45px;top:98.19999999999999px;width:1.2px;height:2px;background:#7a7a7a;"></div>
<div class="r" style="left:550.5px;top:96.6px;width:18.7px;height:5px;background:#fff;border:0.6px solid #e4e4e4;box-sizing:border-box;"></div>
<div class="t" style="left:551.30px;top:98px;font-size:3.1px;line-height:3.1px;color:#555;font-weight:400;">SCOTT</div>
<div class="r" style="left:564.9px;top:96.8px;width:4.3px;height:4.6px;background:linear-gradient(#fafafa,#e6e6e6);border:0.6px solid #b8b8b8;border-radius:1px;box-sizing:border-box;"></div>
<div class="r" style="left:566.45px;top:98.19999999999999px;width:1.2px;height:2px;background:#7a7a7a;"></div>
<div class="r" style="left:573.0px;top:96.6px;width:24.3px;height:5px;background:#fff;border:0.6px solid #e4e4e4;box-sizing:border-box;"></div>
<div class="t" style="left:573.90px;top:98px;font-size:2.9px;line-height:2.9px;color:#555;font-weight:400;">12-JAN-83</div>
<div class="r" style="left:598.8px;top:97.19999999999999px;width:3.6px;height:3.8px;background:linear-gradient(#888 0,#888 35%,#ccc 36%,#aaa);"></div>
<div class="r" style="left:606.4px;top:96.6px;width:18.9px;height:5px;background:#fff;border:0.6px solid #e4e4e4;box-sizing:border-box;"></div>
<div class="t" style="left:607.30px;top:98px;font-size:3.1px;line-height:3.1px;color:#555;font-weight:400;">1100</div>
<div class="r" style="left:479.2px;top:110.82px;width:145.3px;height:0.8px;background:#efefef;"></div>
<div class="r" style="left:480.9px;top:105.32px;width:3.5px;height:3.2px;background:linear-gradient(#fff,#eee);border:0.7px solid #c2c2c2;border-radius:0.6px;box-sizing:border-box;"></div>
<div class="r" style="left:488.5px;top:104.72px;width:30px;height:5px;background:#fff;border:0.6px solid #e4e4e4;box-sizing:border-box;"></div>
<div class="t" style="left:489.50px;top:106px;font-size:3.1px;line-height:3.1px;color:#555;font-weight:400;">ALLEN</div>
<div class="r" style="left:523.3px;top:104.72px;width:23px;height:5px;background:#fff;border:0.6px solid #e4e4e4;box-sizing:border-box;"></div>
<div class="t" style="left:524.10px;top:106px;font-size:3.1px;line-height:3.1px;color:#555;font-weight:400;">SALESMAN</div>
<div class="r" style="left:541.9px;top:104.92px;width:4.3px;height:4.6px;background:linear-gradient(#fafafa,#e6e6e6);border:0.6px solid #b8b8b8;border-radius:1px;box-sizing:border-box;"></div>
<div class="r" style="left:543.45px;top:106.32px;width:1.2px;height:2px;background:#7a7a7a;"></div>
<div class="r" style="left:550.5px;top:104.72px;width:18.7px;height:5px;background:#fff;border:0.6px solid #e4e4e4;box-sizing:border-box;"></div>
<div class="t" style="left:551.30px;top:106px;font-size:3.1px;line-height:3.1px;color:#555;font-weight:400;">BLAKE</div>
<div class="r" style="left:564.9px;top:104.92px;width:4.3px;height:4.6px;background:linear-gradient(#fafafa,#e6e6e6);border:0.6px solid #b8b8b8;border-radius:1px;box-sizing:border-box;"></div>
<div class="r" style="left:566.45px;top:106.32px;width:1.2px;height:2px;background:#7a7a7a;"></div>
<div class="r" style="left:573.0px;top:104.72px;width:24.3px;height:5px;background:#fff;border:0.6px solid #e4e4e4;box-sizing:border-box;"></div>
<div class="t" style="left:573.90px;top:106px;font-size:2.9px;line-height:2.9px;color:#555;font-weight:400;">20-FEB-81</div>
<div class="r" style="left:598.8px;top:105.32px;width:3.6px;height:3.8px;background:linear-gradient(#888 0,#888 35%,#ccc 36%,#aaa);"></div>
<div class="r" style="left:606.4px;top:104.72px;width:18.9px;height:5px;background:#fff;border:0.6px solid #e4e4e4;box-sizing:border-box;"></div>
<div class="t" style="left:607.30px;top:106px;font-size:3.1px;line-height:3.1px;color:#555;font-weight:400;">1600</div>
<div class="r" style="left:479.2px;top:118.94px;width:145.3px;height:0.8px;background:#efefef;"></div>
<div class="r" style="left:480.9px;top:113.43999999999998px;width:3.5px;height:3.2px;background:linear-gradient(#fff,#eee);border:0.7px solid #c2c2c2;border-radius:0.6px;box-sizing:border-box;"></div>
<div class="r" style="left:488.5px;top:112.83999999999999px;width:30px;height:5px;background:#fff;border:0.6px solid #e4e4e4;box-sizing:border-box;"></div>
<div class="t" style="left:489.50px;top:114px;font-size:3.1px;line-height:3.1px;color:#555;font-weight:400;">BLAKE</div>
<div class="r" style="left:523.3px;top:112.83999999999999px;width:23px;height:5px;background:#fff;border:0.6px solid #e4e4e4;box-sizing:border-box;"></div>
<div class="t" style="left:524.10px;top:114px;font-size:3.1px;line-height:3.1px;color:#555;font-weight:400;">MANAGER</div>
<div class="r" style="left:541.9px;top:113.03999999999999px;width:4.3px;height:4.6px;background:linear-gradient(#fafafa,#e6e6e6);border:0.6px solid #b8b8b8;border-radius:1px;box-sizing:border-box;"></div>
<div class="r" style="left:543.45px;top:114.43999999999998px;width:1.2px;height:2px;background:#7a7a7a;"></div>
<div class="r" style="left:550.5px;top:112.83999999999999px;width:18.7px;height:5px;background:#fff;border:0.6px solid #e4e4e4;box-sizing:border-box;"></div>
<div class="t" style="left:551.30px;top:114px;font-size:3.1px;line-height:3.1px;color:#555;font-weight:400;">KING</div>
<div class="r" style="left:564.9px;top:113.03999999999999px;width:4.3px;height:4.6px;background:linear-gradient(#fafafa,#e6e6e6);border:0.6px solid #b8b8b8;border-radius:1px;box-sizing:border-box;"></div>
<div class="r" style="left:566.45px;top:114.43999999999998px;width:1.2px;height:2px;background:#7a7a7a;"></div>
<div class="r" style="left:573.0px;top:112.83999999999999px;width:24.3px;height:5px;background:#fff;border:0.6px solid #e4e4e4;box-sizing:border-box;"></div>
<div class="t" style="left:573.90px;top:114px;font-size:2.9px;line-height:2.9px;color:#555;font-weight:400;">01-MAY-81</div>
<div class="r" style="left:598.8px;top:113.43999999999998px;width:3.6px;height:3.8px;background:linear-gradient(#888 0,#888 35%,#ccc 36%,#aaa);"></div>
<div class="r" style="left:606.4px;top:112.83999999999999px;width:18.9px;height:5px;background:#fff;border:0.6px solid #e4e4e4;box-sizing:border-box;"></div>
<div class="t" style="left:607.30px;top:114px;font-size:3.1px;line-height:3.1px;color:#555;font-weight:400;">2850</div>
<div class="r" style="left:479.2px;top:127.06px;width:145.3px;height:0.8px;background:#efefef;"></div>
<div class="r" style="left:480.9px;top:121.55999999999999px;width:3.5px;height:3.2px;background:linear-gradient(#fff,#eee);border:0.7px solid #c2c2c2;border-radius:0.6px;box-sizing:border-box;"></div>
<div class="r" style="left:488.5px;top:120.96px;width:30px;height:5px;background:#fff;border:0.6px solid #e4e4e4;box-sizing:border-box;"></div>
<div class="t" style="left:489.50px;top:123px;font-size:3.1px;line-height:3.1px;color:#555;font-weight:400;">CLARK</div>
<div class="r" style="left:523.3px;top:120.96px;width:23px;height:5px;background:#fff;border:0.6px solid #e4e4e4;box-sizing:border-box;"></div>
<div class="t" style="left:524.10px;top:123px;font-size:3.1px;line-height:3.1px;color:#555;font-weight:400;">MANAGER</div>
<div class="r" style="left:541.9px;top:121.16px;width:4.3px;height:4.6px;background:linear-gradient(#fafafa,#e6e6e6);border:0.6px solid #b8b8b8;border-radius:1px;box-sizing:border-box;"></div>
<div class="r" style="left:543.45px;top:122.55999999999999px;width:1.2px;height:2px;background:#7a7a7a;"></div>
<div class="r" style="left:550.5px;top:120.96px;width:18.7px;height:5px;background:#fff;border:0.6px solid #e4e4e4;box-sizing:border-box;"></div>
<div class="t" style="left:551.30px;top:123px;font-size:3.1px;line-height:3.1px;color:#555;font-weight:400;">KING</div>
<div class="r" style="left:564.9px;top:121.16px;width:4.3px;height:4.6px;background:linear-gradient(#fafafa,#e6e6e6);border:0.6px solid #b8b8b8;border-radius:1px;box-sizing:border-box;"></div>
<div class="r" style="left:566.45px;top:122.55999999999999px;width:1.2px;height:2px;background:#7a7a7a;"></div>
<div class="r" style="left:573.0px;top:120.96px;width:24.3px;height:5px;background:#fff;border:0.6px solid #e4e4e4;box-sizing:border-box;"></div>
<div class="t" style="left:573.90px;top:123px;font-size:2.9px;line-height:2.9px;color:#555;font-weight:400;">09-JUN-81</div>
<div class="r" style="left:598.8px;top:121.55999999999999px;width:3.6px;height:3.8px;background:linear-gradient(#888 0,#888 35%,#ccc 36%,#aaa);"></div>
<div class="r" style="left:606.4px;top:120.96px;width:18.9px;height:5px;background:#fff;border:0.6px solid #e4e4e4;box-sizing:border-box;"></div>
<div class="t" style="left:607.30px;top:123px;font-size:3.1px;line-height:3.1px;color:#555;font-weight:400;">2450</div>
<div class="r" style="left:479.2px;top:135.18px;width:145.3px;height:0.8px;background:#efefef;"></div>
<div class="r" style="left:480.9px;top:129.67999999999998px;width:3.5px;height:3.2px;background:linear-gradient(#fff,#eee);border:0.7px solid #c2c2c2;border-radius:0.6px;box-sizing:border-box;"></div>
<div class="r" style="left:488.5px;top:129.07999999999998px;width:30px;height:5px;background:#fff;border:0.6px solid #e4e4e4;box-sizing:border-box;"></div>
<div class="t" style="left:489.50px;top:131px;font-size:3.1px;line-height:3.1px;color:#555;font-weight:400;">FORD</div>
<div class="r" style="left:523.3px;top:129.07999999999998px;width:23px;height:5px;background:#fff;border:0.6px solid #e4e4e4;box-sizing:border-box;"></div>
<div class="t" style="left:524.10px;top:131px;font-size:3.1px;line-height:3.1px;color:#555;font-weight:400;">ANALYST</div>
<div class="r" style="left:541.9px;top:129.27999999999997px;width:4.3px;height:4.6px;background:linear-gradient(#fafafa,#e6e6e6);border:0.6px solid #b8b8b8;border-radius:1px;box-sizing:border-box;"></div>
<div class="r" style="left:543.45px;top:130.67999999999998px;width:1.2px;height:2px;background:#7a7a7a;"></div>
<div class="r" style="left:550.5px;top:129.07999999999998px;width:18.7px;height:5px;background:#fff;border:0.6px solid #e4e4e4;box-sizing:border-box;"></div>
<div class="t" style="left:551.30px;top:131px;font-size:3.1px;line-height:3.1px;color:#555;font-weight:400;">JONES</div>
<div class="r" style="left:564.9px;top:129.27999999999997px;width:4.3px;height:4.6px;background:linear-gradient(#fafafa,#e6e6e6);border:0.6px solid #b8b8b8;border-radius:1px;box-sizing:border-box;"></div>
<div class="r" style="left:566.45px;top:130.67999999999998px;width:1.2px;height:2px;background:#7a7a7a;"></div>
<div class="r" style="left:573.0px;top:129.07999999999998px;width:24.3px;height:5px;background:#fff;border:0.6px solid #e4e4e4;box-sizing:border-box;"></div>
<div class="t" style="left:573.90px;top:131px;font-size:2.9px;line-height:2.9px;color:#555;font-weight:400;">03-DEC-81</div>
<div class="r" style="left:598.8px;top:129.67999999999998px;width:3.6px;height:3.8px;background:linear-gradient(#888 0,#888 35%,#ccc 36%,#aaa);"></div>
<div class="r" style="left:606.4px;top:129.07999999999998px;width:18.9px;height:5px;background:#fff;border:0.6px solid #e4e4e4;box-sizing:border-box;"></div>
<div class="t" style="left:607.30px;top:131px;font-size:3.1px;line-height:3.1px;color:#555;font-weight:400;">3000</div>
<div class="r" style="left:479.2px;top:143.3px;width:145.3px;height:0.8px;background:#efefef;"></div>
<div class="r" style="left:480.9px;top:137.79999999999998px;width:3.5px;height:3.2px;background:linear-gradient(#fff,#eee);border:0.7px solid #c2c2c2;border-radius:0.6px;box-sizing:border-box;"></div>
<div class="r" style="left:488.5px;top:137.2px;width:30px;height:5px;background:#fff;border:0.6px solid #e4e4e4;box-sizing:border-box;"></div>
<div class="t" style="left:489.50px;top:139px;font-size:3.1px;line-height:3.1px;color:#555;font-weight:400;">JAMES</div>
<div class="r" style="left:523.3px;top:137.2px;width:23px;height:5px;background:#fff;border:0.6px solid #e4e4e4;box-sizing:border-box;"></div>
<div class="t" style="left:524.10px;top:139px;font-size:3.1px;line-height:3.1px;color:#555;font-weight:400;">CLERK</div>
<div class="r" style="left:541.9px;top:137.39999999999998px;width:4.3px;height:4.6px;background:linear-gradient(#fafafa,#e6e6e6);border:0.6px solid #b8b8b8;border-radius:1px;box-sizing:border-box;"></div>
<div class="r" style="left:543.45px;top:138.79999999999998px;width:1.2px;height:2px;background:#7a7a7a;"></div>
<div class="r" style="left:550.5px;top:137.2px;width:18.7px;height:5px;background:#fff;border:0.6px solid #e4e4e4;box-sizing:border-box;"></div>
<div class="t" style="left:551.30px;top:139px;font-size:3.1px;line-height:3.1px;color:#555;font-weight:400;">BLAKE</div>
<div class="r" style="left:564.9px;top:137.39999999999998px;width:4.3px;height:4.6px;background:linear-gradient(#fafafa,#e6e6e6);border:0.6px solid #b8b8b8;border-radius:1px;box-sizing:border-box;"></div>
<div class="r" style="left:566.45px;top:138.79999999999998px;width:1.2px;height:2px;background:#7a7a7a;"></div>
<div class="r" style="left:573.0px;top:137.2px;width:24.3px;height:5px;background:#fff;border:0.6px solid #e4e4e4;box-sizing:border-box;"></div>
<div class="t" style="left:573.90px;top:139px;font-size:2.9px;line-height:2.9px;color:#555;font-weight:400;">03-DEC-81</div>
<div class="r" style="left:598.8px;top:137.79999999999998px;width:3.6px;height:3.8px;background:linear-gradient(#888 0,#888 35%,#ccc 36%,#aaa);"></div>
<div class="r" style="left:606.4px;top:137.2px;width:18.9px;height:5px;background:#fff;border:0.6px solid #e4e4e4;box-sizing:border-box;"></div>
<div class="t" style="left:607.30px;top:139px;font-size:3.1px;line-height:3.1px;color:#555;font-weight:400;">950</div>
<div class="r" style="left:479.2px;top:151.42px;width:145.3px;height:0.8px;background:#efefef;"></div>
<div class="r" style="left:480.9px;top:145.92px;width:3.5px;height:3.2px;background:linear-gradient(#fff,#eee);border:0.7px solid #c2c2c2;border-radius:0.6px;box-sizing:border-box;"></div>
<div class="r" style="left:488.5px;top:145.32px;width:30px;height:5px;background:#fff;border:0.6px solid #e4e4e4;box-sizing:border-box;"></div>
<div class="t" style="left:489.50px;top:147px;font-size:3.1px;line-height:3.1px;color:#555;font-weight:400;">JONES</div>
<div class="r" style="left:523.3px;top:145.32px;width:23px;height:5px;background:#fff;border:0.6px solid #e4e4e4;box-sizing:border-box;"></div>
<div class="t" style="left:524.10px;top:147px;font-size:3.1px;line-height:3.1px;color:#555;font-weight:400;">MANAGER</div>
<div class="r" style="left:541.9px;top:145.51999999999998px;width:4.3px;height:4.6px;background:linear-gradient(#fafafa,#e6e6e6);border:0.6px solid #b8b8b8;border-radius:1px;box-sizing:border-box;"></div>
<div class="r" style="left:543.45px;top:146.92px;width:1.2px;height:2px;background:#7a7a7a;"></div>
<div class="r" style="left:550.5px;top:145.32px;width:18.7px;height:5px;background:#fff;border:0.6px solid #e4e4e4;box-sizing:border-box;"></div>
<div class="t" style="left:551.30px;top:147px;font-size:3.1px;line-height:3.1px;color:#555;font-weight:400;">KING</div>
<div class="r" style="left:564.9px;top:145.51999999999998px;width:4.3px;height:4.6px;background:linear-gradient(#fafafa,#e6e6e6);border:0.6px solid #b8b8b8;border-radius:1px;box-sizing:border-box;"></div>
<div class="r" style="left:566.45px;top:146.92px;width:1.2px;height:2px;background:#7a7a7a;"></div>
<div class="r" style="left:573.0px;top:145.32px;width:24.3px;height:5px;background:#fff;border:0.6px solid #e4e4e4;box-sizing:border-box;"></div>
<div class="t" style="left:573.90px;top:147px;font-size:2.9px;line-height:2.9px;color:#555;font-weight:400;">02-APR-81</div>
<div class="r" style="left:598.8px;top:145.92px;width:3.6px;height:3.8px;background:linear-gradient(#888 0,#888 35%,#ccc 36%,#aaa);"></div>
<div class="r" style="left:606.4px;top:145.32px;width:18.9px;height:5px;background:#fff;border:0.6px solid #e4e4e4;box-sizing:border-box;"></div>
<div class="t" style="left:607.30px;top:147px;font-size:3.1px;line-height:3.1px;color:#555;font-weight:400;">2975</div>
<div class="r" style="left:479.2px;top:159.54px;width:145.3px;height:0.8px;background:#efefef;"></div>
<div class="r" style="left:480.9px;top:154.04px;width:3.5px;height:3.2px;background:linear-gradient(#fff,#eee);border:0.7px solid #c2c2c2;border-radius:0.6px;box-sizing:border-box;"></div>
<div class="r" style="left:488.5px;top:153.44px;width:30px;height:5px;background:#fff;border:0.6px solid #e4e4e4;box-sizing:border-box;"></div>
<div class="t" style="left:489.50px;top:155px;font-size:3.1px;line-height:3.1px;color:#555;font-weight:400;">KING</div>
<div class="r" style="left:523.3px;top:153.44px;width:23px;height:5px;background:#fff;border:0.6px solid #e4e4e4;box-sizing:border-box;"></div>
<div class="t" style="left:524.10px;top:155px;font-size:3.1px;line-height:3.1px;color:#555;font-weight:400;">PRESIDENT</div>
<div class="r" style="left:541.9px;top:153.64px;width:4.3px;height:4.6px;background:linear-gradient(#fafafa,#e6e6e6);border:0.6px solid #b8b8b8;border-radius:1px;box-sizing:border-box;"></div>
<div class="r" style="left:543.45px;top:155.04px;width:1.2px;height:2px;background:#7a7a7a;"></div>
<div class="r" style="left:550.5px;top:153.44px;width:18.7px;height:5px;background:#fff;border:0.6px solid #e4e4e4;box-sizing:border-box;"></div>
<div class="t" style="left:551.30px;top:155px;font-size:3.1px;line-height:3.1px;color:#555;font-weight:400;">- Select -</div>
<div class="r" style="left:564.9px;top:153.64px;width:4.3px;height:4.6px;background:linear-gradient(#fafafa,#e6e6e6);border:0.6px solid #b8b8b8;border-radius:1px;box-sizing:border-box;"></div>
<div class="r" style="left:566.45px;top:155.04px;width:1.2px;height:2px;background:#7a7a7a;"></div>
<div class="r" style="left:573.0px;top:153.44px;width:24.3px;height:5px;background:#fff;border:0.6px solid #e4e4e4;box-sizing:border-box;"></div>
<div class="t" style="left:573.90px;top:155px;font-size:2.9px;line-height:2.9px;color:#555;font-weight:400;">17-NOV-81</div>
<div class="r" style="left:598.8px;top:154.04px;width:3.6px;height:3.8px;background:linear-gradient(#888 0,#888 35%,#ccc 36%,#aaa);"></div>
<div class="r" style="left:606.4px;top:153.44px;width:18.9px;height:5px;background:#fff;border:0.6px solid #e4e4e4;box-sizing:border-box;"></div>
<div class="t" style="left:607.30px;top:155px;font-size:3.1px;line-height:3.1px;color:#555;font-weight:400;">5000</div>
<div class="r" style="left:479.2px;top:167.66px;width:145.3px;height:0.8px;background:#efefef;"></div>
<div class="r" style="left:480.9px;top:162.16px;width:3.5px;height:3.2px;background:linear-gradient(#fff,#eee);border:0.7px solid #c2c2c2;border-radius:0.6px;box-sizing:border-box;"></div>
<div class="r" style="left:488.5px;top:161.56px;width:30px;height:5px;background:#fff;border:0.6px solid #e4e4e4;box-sizing:border-box;"></div>
<div class="t" style="left:489.50px;top:163px;font-size:3.1px;line-height:3.1px;color:#555;font-weight:400;">MARTIN</div>
<div class="r" style="left:523.3px;top:161.56px;width:23px;height:5px;background:#fff;border:0.6px solid #e4e4e4;box-sizing:border-box;"></div>
<div class="t" style="left:524.10px;top:163px;font-size:3.1px;line-height:3.1px;color:#555;font-weight:400;">SALESMAN</div>
<div class="r" style="left:541.9px;top:161.76px;width:4.3px;height:4.6px;background:linear-gradient(#fafafa,#e6e6e6);border:0.6px solid #b8b8b8;border-radius:1px;box-sizing:border-box;"></div>
<div class="r" style="left:543.45px;top:163.16px;width:1.2px;height:2px;background:#7a7a7a;"></div>
<div class="r" style="left:550.5px;top:161.56px;width:18.7px;height:5px;background:#fff;border:0.6px solid #e4e4e4;box-sizing:border-box;"></div>
<div class="t" style="left:551.30px;top:163px;font-size:3.1px;line-height:3.1px;color:#555;font-weight:400;">BLAKE</div>
<div class="r" style="left:564.9px;top:161.76px;width:4.3px;height:4.6px;background:linear-gradient(#fafafa,#e6e6e6);border:0.6px solid #b8b8b8;border-radius:1px;box-sizing:border-box;"></div>
<div class="r" style="left:566.45px;top:163.16px;width:1.2px;height:2px;background:#7a7a7a;"></div>
<div class="r" style="left:573.0px;top:161.56px;width:24.3px;height:5px;background:#fff;border:0.6px solid #e4e4e4;box-sizing:border-box;"></div>
<div class="t" style="left:573.90px;top:163px;font-size:2.9px;line-height:2.9px;color:#555;font-weight:400;">28-SEP-81</div>
<div class="r" style="left:598.8px;top:162.16px;width:3.6px;height:3.8px;background:linear-gradient(#888 0,#888 35%,#ccc 36%,#aaa);"></div>
<div class="r" style="left:606.4px;top:161.56px;width:18.9px;height:5px;background:#fff;border:0.6px solid #e4e4e4;box-sizing:border-box;"></div>
<div class="t" style="left:607.30px;top:163px;font-size:3.1px;line-height:3.1px;color:#555;font-weight:400;">1250</div>
<div class="r" style="left:479.2px;top:175.78px;width:145.3px;height:0.8px;background:#efefef;"></div>
<div class="r" style="left:480.9px;top:170.28px;width:3.5px;height:3.2px;background:linear-gradient(#fff,#eee);border:0.7px solid #c2c2c2;border-radius:0.6px;box-sizing:border-box;"></div>
<div class="r" style="left:488.5px;top:169.68px;width:30px;height:5px;background:#fff;border:0.6px solid #e4e4e4;box-sizing:border-box;"></div>
<div class="t" style="left:489.50px;top:171px;font-size:3.1px;line-height:3.1px;color:#555;font-weight:400;">MILLER</div>
<div class="r" style="left:523.3px;top:169.68px;width:23px;height:5px;background:#fff;border:0.6px solid #e4e4e4;box-sizing:border-box;"></div>
<div class="t" style="left:524.10px;top:171px;font-size:3.1px;line-height:3.1px;color:#555;font-weight:400;">CLERK</div>
<div class="r" style="left:541.9px;top:169.88px;width:4.3px;height:4.6px;background:linear-gradient(#fafafa,#e6e6e6);border:0.6px solid #b8b8b8;border-radius:1px;box-sizing:border-box;"></div>
<div class="r" style="left:543.45px;top:171.28px;width:1.2px;height:2px;background:#7a7a7a;"></div>
<div class="r" style="left:550.5px;top:169.68px;width:18.7px;height:5px;background:#fff;border:0.6px solid #e4e4e4;box-sizing:border-box;"></div>
<div class="t" style="left:551.30px;top:171px;font-size:3.1px;line-height:3.1px;color:#555;font-weight:400;">CLARK</div>
<div class="r" style="left:564.9px;top:169.88px;width:4.3px;height:4.6px;background:linear-gradient(#fafafa,#e6e6e6);border:0.6px solid #b8b8b8;border-radius:1px;box-sizing:border-box;"></div>
<div class="r" style="left:566.45px;top:171.28px;width:1.2px;height:2px;background:#7a7a7a;"></div>
<div class="r" style="left:573.0px;top:169.68px;width:24.3px;height:5px;background:#fff;border:0.6px solid #e4e4e4;box-sizing:border-box;"></div>
<div class="t" style="left:573.90px;top:171px;font-size:2.9px;line-height:2.9px;color:#555;font-weight:400;">23-JAN-82</div>
<div class="r" style="left:598.8px;top:170.28px;width:3.6px;height:3.8px;background:linear-gradient(#888 0,#888 35%,#ccc 36%,#aaa);"></div>
<div class="r" style="left:606.4px;top:169.68px;width:18.9px;height:5px;background:#fff;border:0.6px solid #e4e4e4;box-sizing:border-box;"></div>
<div class="t" style="left:607.30px;top:171px;font-size:3.1px;line-height:3.1px;color:#555;font-weight:400;">1300</div>
<div class="r" style="left:176.7px;top:86px;width:135.7px;height:90.8px;background:linear-gradient(#f4f4f4,#e9e9e9 9%,#e7e7e7);"></div>
<div class="t" style="left:180.90px;top:91px;font-size:5.9px;line-height:5.9px;color:#2a2a2a;font-weight:400;transform:scaleX(0.96);transform-origin:0 0;">Form on Table</div>
<div class="t" style="left:180.00px;width:34.6px;text-align:right;top:103px;font-size:3.7px;line-height:3.7px;color:#444;font-weight:400;transform:scaleX(0.9);transform-origin:100% 0;">Ename</div>
<div class="r" style="left:216.5px;top:100.6px;width:52.6px;height:6.2px;background:#fff;border:0.5px solid #d6d6d6;border-radius:1.2px;box-sizing:border-box;"></div>
<div class="t" style="left:217.80px;top:103px;font-size:3.7px;line-height:3.7px;color:#333;font-weight:400;transform:scaleX(0.9);transform-origin:0 0;">SMITH</div>
<div class="t" style="left:180.00px;width:34.6px;text-align:right;top:113px;font-size:3.7px;line-height:3.7px;color:#444;font-weight:400;transform:scaleX(0.9);transform-origin:100% 0;">Job</div>
<div class="r" style="left:216.5px;top:110.9px;width:52.6px;height:6.2px;background:#fff;border:0.5px solid #d6d6d6;border-radius:1.2px;box-sizing:border-box;"></div>
<div class="t" style="left:217.80px;top:113px;font-size:3.7px;line-height:3.7px;color:#333;font-weight:400;transform:scaleX(0.9);transform-origin:0 0;">CLERK</div>
<div class="t" style="left:180.00px;width:34.6px;text-align:right;top:123px;font-size:3.7px;line-height:3.7px;color:#444;font-weight:400;transform:scaleX(0.9);transform-origin:100% 0;">Mgr</div>
<div class="r" style="left:216.5px;top:121.2px;width:52.6px;height:6.2px;background:#fff;border:0.5px solid #d6d6d6;border-radius:1.2px;box-sizing:border-box;"></div>
<div class="t" style="left:217.70px;width:50px;text-align:right;top:124px;font-size:3.7px;line-height:3.7px;color:#333;font-weight:400;transform:scaleX(0.9);transform-origin:100% 0;">7902</div>
<div class="t" style="left:180.00px;width:34.6px;text-align:right;top:134px;font-size:3.7px;line-height:3.7px;color:#444;font-weight:400;transform:scaleX(0.9);transform-origin:100% 0;">Hiredate</div>
<div class="r" style="left:216.5px;top:131.5px;width:52.6px;height:6.2px;background:#fff;border:0.5px solid #d6d6d6;border-radius:1.2px;box-sizing:border-box;"></div>
<div class="t" style="left:217.80px;top:134px;font-size:3.7px;line-height:3.7px;color:#333;font-weight:400;transform:scaleX(0.9);transform-origin:0 0;">17-DEC-80</div>
<div class="t" style="left:180.00px;width:34.6px;text-align:right;top:144px;font-size:3.7px;line-height:3.7px;color:#444;font-weight:400;transform:scaleX(0.9);transform-origin:100% 0;">Deptno</div>
<div class="r" style="left:216.5px;top:141.8px;width:52.6px;height:6.2px;background:#fff;border:0.5px solid #d6d6d6;border-radius:1.2px;box-sizing:border-box;"></div>
<div class="t" style="left:217.70px;width:50px;text-align:right;top:144px;font-size:3.7px;line-height:3.7px;color:#333;font-weight:400;transform:scaleX(0.9);transform-origin:100% 0;">20</div>
<div class="r" style="left:269.9px;top:132.3px;width:4.8px;height:3.6px;background:linear-gradient(#555 0,#555 30%,#999 31%,#888 100%);border-radius:0.5px;"></div>
<div class="r" style="left:225.3px;top:156px;width:22px;height:11.5px;background:linear-gradient(#fdfdfd,#e4e4e4);border:0.6px solid #c4c4c4;border-radius:1.2px;box-sizing:border-box;box-shadow:0 0.4px 0.6px rgba(0,0,0,0.12);"></div>
<div class="t" style="left:221.30px;width:30px;text-align:center;top:160px;font-size:4px;line-height:4px;color:#222;font-weight:700;">Cancel</div>
<div class="r" style="left:248.8px;top:156px;width:20.3px;height:11.5px;background:linear-gradient(#fdfdfd,#e4e4e4);border:0.6px solid #c4c4c4;border-radius:1.2px;box-sizing:border-box;box-shadow:0 0.4px 0.6px rgba(0,0,0,0.12);"></div>
<div class="t" style="left:243.95px;width:30px;text-align:center;top:160px;font-size:4px;line-height:4px;color:#222;font-weight:700;">Delete</div>
<div class="r" style="left:270.4px;top:155.7px;width:37.7px;height:11.5px;background:linear-gradient(#4b8ce4,#2a67c8 55%,#1f58b8);border:0.6px solid #2456a8;border-radius:1.2px;box-sizing:border-box;box-shadow:0 0.4px 0.6px rgba(0,0,0,0.2);"></div>
<div class="t" style="left:269.25px;width:40px;text-align:center;top:160px;font-size:4px;line-height:4px;color:#fff;font-weight:700;">Apply Changes</div>
<div class="r" style="left:327px;top:86px;width:136px;height:90.8px;background:#fff;"></div>
<div class="r" style="left:330px;top:88.3px;width:11.55px;height:13px;background:linear-gradient(#f7f7f7 0%,#ececec 55%,#e2e2e2 70%,#d9d9d9 72%,#fdfdfd 75%,#fff 100%);border:0.6px solid #dadada;box-sizing:border-box;border-radius:1.5px;"></div>
<div class="t" style="left:331.60px;top:93px;font-size:3.2px;line-height:3.2px;color:#222;font-weight:400;">1 Col</div>
<div class="r" style="left:344.15px;top:88.3px;width:118.85px;height:13px;background:linear-gradient(#f7f7f7 0%,#ececec 55%,#e2e2e2 70%,#d9d9d9 72%,#fdfdfd 75%,#fff 100%);border:0.6px solid #dadada;box-sizing:border-box;border-right:none;border-radius:1.5px 0 0 1.5px;"></div>
<div class="t" style="left:345.95px;top:93px;font-size:3.2px;line-height:3.2px;color:#222;font-weight:400;">11 Col</div>
<div class="r" style="left:330px;top:102.87px;width:26.0px;height:13px;background:linear-gradient(#f7f7f7 0%,#ececec 55%,#e2e2e2 70%,#d9d9d9 72%,#fdfdfd 75%,#fff 100%);border:0.6px solid #dadada;box-sizing:border-box;border-radius:1.5px;"></div>
<div class="t" style="left:331.60px;top:108px;font-size:3.2px;line-height:3.2px;color:#222;font-weight:400;">2 Col</div>
<div class="r" style="left:358.6px;top:102.87px;width:104.4px;height:13px;background:linear-gradient(#f7f7f7 0%,#ececec 55%,#e2e2e2 70%,#d9d9d9 72%,#fdfdfd 75%,#fff 100%);border:0.6px solid #dadada;box-sizing:border-box;border-right:none;border-radius:1.5px 0 0 1.5px;"></div>
<div class="t" style="left:360.40px;top:108px;font-size:3.2px;line-height:3.2px;color:#222;font-weight:400;">10 Col</div>
<div class="r" style="left:330px;top:117.44px;width:40.45px;height:13px;background:linear-gradient(#f7f7f7 0%,#ececec 55%,#e2e2e2 70%,#d9d9d9 72%,#fdfdfd 75%,#fff 100%);border:0.6px solid #dadada;box-sizing:border-box;border-radius:1.5px;"></div>
<div class="t" style="left:331.60px;top:122px;font-size:3.2px;line-height:3.2px;color:#222;font-weight:400;">3 Col</div>
<div class="r" style="left:373.05px;top:117.44px;width:89.95px;height:13px;background:linear-gradient(#f7f7f7 0%,#ececec 55%,#e2e2e2 70%,#d9d9d9 72%,#fdfdfd 75%,#fff 100%);border:0.6px solid #dadada;box-sizing:border-box;border-right:none;border-radius:1.5px 0 0 1.5px;"></div>
<div class="t" style="left:374.85px;top:122px;font-size:3.2px;line-height:3.2px;color:#222;font-weight:400;">7 Col</div>
<div class="r" style="left:330px;top:132.01px;width:54.9px;height:13px;background:linear-gradient(#f7f7f7 0%,#ececec 55%,#e2e2e2 70%,#d9d9d9 72%,#fdfdfd 75%,#fff 100%);border:0.6px solid #dadada;box-sizing:border-box;border-radius:1.5px;"></div>
<div class="t" style="left:331.60px;top:137px;font-size:3.2px;line-height:3.2px;color:#222;font-weight:400;">4 Col</div>
<div class="r" style="left:387.5px;top:132.01px;width:75.5px;height:13px;background:linear-gradient(#f7f7f7 0%,#ececec 55%,#e2e2e2 70%,#d9d9d9 72%,#fdfdfd 75%,#fff 100%);border:0.6px solid #dadada;box-sizing:border-box;border-right:none;border-radius:1.5px 0 0 1.5px;"></div>
<div class="t" style="left:389.30px;top:137px;font-size:3.2px;line-height:3.2px;color:#222;font-weight:400;">6 Col</div>
<div class="r" style="left:330px;top:146.57999999999998px;width:69.35px;height:13px;background:linear-gradient(#f7f7f7 0%,#ececec 55%,#e2e2e2 70%,#d9d9d9 72%,#fdfdfd 75%,#fff 100%);border:0.6px solid #dadada;box-sizing:border-box;border-radius:1.5px;"></div>
<div class="t" style="left:331.60px;top:151px;font-size:3.2px;line-height:3.2px;color:#222;font-weight:400;">5 Col</div>
<div class="r" style="left:401.95px;top:146.57999999999998px;width:61.05px;height:13px;background:linear-gradient(#f7f7f7 0%,#ececec 55%,#e2e2e2 70%,#d9d9d9 72%,#fdfdfd 75%,#fff 100%);border:0.6px solid #dadada;box-sizing:border-box;border-right:none;border-radius:1.5px 0 0 1.5px;"></div>
<div class="t" style="left:403.75px;top:151px;font-size:3.2px;line-height:3.2px;color:#222;font-weight:400;">7 Col</div>
<div class="r" style="left:330px;top:161.14999999999998px;width:83.8px;height:13px;background:linear-gradient(#f7f7f7 0%,#ececec 55%,#e2e2e2 70%,#d9d9d9 72%,#fdfdfd 75%,#fff 100%);border:0.6px solid #dadada;box-sizing:border-box;border-radius:1.5px;"></div>
<div class="t" style="left:331.60px;top:166px;font-size:3.2px;line-height:3.2px;color:#222;font-weight:400;">6 Col</div>
<div class="r" style="left:416.4px;top:161.14999999999998px;width:46.6px;height:13px;background:linear-gradient(#f7f7f7 0%,#ececec 55%,#e2e2e2 70%,#d9d9d9 72%,#fdfdfd 75%,#fff 100%);border:0.6px solid #dadada;box-sizing:border-box;border-right:none;border-radius:1.5px 0 0 1.5px;"></div>
<div class="t" style="left:418.20px;top:166px;font-size:3.2px;line-height:3.2px;color:#222;font-weight:400;">6 Col</div>
<svg class="r" style="left:9.6px;top:212.7px" width="9.3" height="9.3" viewBox="0 0 10 10"><defs><radialGradient id="ag" cx="50%" cy="45%" r="55%"><stop offset="0" stop-color="#6a6a6a"/><stop offset="0.8" stop-color="#555"/><stop offset="1" stop-color="#444"/></radialGradient></defs><circle cx="5" cy="5" r="4.9" fill="url(#ag)"/><path d="M3.9 2.6 L6.1 5 L3.9 7.4" stroke="#fff" stroke-width="1.5" fill="none" stroke-linejoin="miter"/></svg>
<div class="t" style="left:22.25px;top:214px;font-size:7.3px;line-height:7.3px;color:#222;font-weight:700;transform:scaleX(0.915);transform-origin:0 0;">About Theme 25</div>
<div class="r" style="left:10px;top:236px;width:699px;height:1px;background:#e8e8e8;"></div>
<div class="t" style="left:10.00px;top:246px;font-size:7.3px;line-height:7.3px;color:#222;font-weight:700;transform:scaleX(0.91);transform-origin:0 0;">Additional Oracle APEX Communities and Resources</div>
<div class="r" style="left:10px;top:257.5px;width:111px;height:61px;background:linear-gradient(#fff 0%,#fff 38%,#ededf1 57%,#f5f6f8 80%,#fafafb 100%);border:1px solid #e3e5ea;border-radius:2px;box-sizing:border-box;"></div>
<div class="t" style="left:-34.50px;width:200px;text-align:center;top:299px;font-size:8px;line-height:8px;color:#3c3c3c;font-weight:400;transform:scaleX(0.835);transform-origin:50% 0;">Oracle OTN Forums</div>
<div class="r" style="left:127.5px;top:257.5px;width:111.0px;height:61px;background:linear-gradient(#fff 0%,#fff 38%,#ededf1 57%,#f5f6f8 80%,#fafafb 100%);border:1px solid #e3e5ea;border-radius:2px;box-sizing:border-box;"></div>
<div class="t" style="left:83.00px;width:200px;text-align:center;top:299px;font-size:8px;line-height:8px;color:#3c3c3c;font-weight:400;transform:scaleX(0.835);transform-origin:50% 0;">Connect on LinkedIn</div>
<div class="r" style="left:245.5px;top:257.5px;width:110.5px;height:61px;background:linear-gradient(#fff 0%,#fff 38%,#ededf1 57%,#f5f6f8 80%,#fafafb 100%);border:1px solid #e3e5ea;border-radius:2px;box-sizing:border-box;"></div>
<div class="t" style="left:200.75px;width:200px;text-align:center;top:299px;font-size:8px;line-height:8px;color:#3c3c3c;font-weight:400;transform:scaleX(0.835);transform-origin:50% 0;">Follow us on Twitter</div>
<div class="r" style="left:363.5px;top:257.5px;width:110.5px;height:61px;background:linear-gradient(#fff 0%,#fff 38%,#ededf1 57%,#f5f6f8 80%,#fafafb 100%);border:1px solid #e3e5ea;border-radius:2px;box-sizing:border-box;"></div>
<div class="t" style="left:318.75px;width:200px;text-align:center;top:299px;font-size:8px;line-height:8px;color:#3c3c3c;font-weight:400;transform:scaleX(0.835);transform-origin:50% 0;">Oracle Database Cloud Service</div>
<div class="r" style="left:481px;top:257.5px;width:110.5px;height:61px;background:linear-gradient(#fff 0%,#fff 38%,#ededf1 57%,#f5f6f8 80%,#fafafb 100%);border:1px solid #e3e5ea;border-radius:2px;box-sizing:border-box;"></div>
<div class="t" style="left:436.25px;width:200px;text-align:center;top:299px;font-size:8px;line-height:8px;color:#3c3c3c;font-weight:400;transform:scaleX(0.835);transform-origin:50% 0;">apex.oracle.com</div>
<div class="r" style="left:599px;top:257.5px;width:110.5px;height:61px;background:linear-gradient(#fff 0%,#fff 38%,#ededf1 57%,#f5f6f8 80%,#fafafb 100%);border:1px solid #e3e5ea;border-radius:2px;box-sizing:border-box;"></div>
<div class="t" style="left:554.25px;width:200px;text-align:center;top:299px;font-size:8px;line-height:8px;color:#3c3c3c;font-weight:400;transform:scaleX(0.835);transform-origin:50% 0;">APEX on OTN</div>
<svg class="r" style="left:46px;top:269.6px" width="40" height="24" viewBox="0 0 40 24"><defs><linearGradient id="pd" x1="0" y1="0" x2="0" y2="1"><stop offset="0" stop-color="#5a5a5a"/><stop offset="1" stop-color="#1a1a1a"/></linearGradient><linearGradient id="pb" x1="0" y1="0" x2="0" y2="1"><stop offset="0" stop-color="#6496d8"/><stop offset="1" stop-color="#3a6fc0"/></linearGradient></defs><path transform="translate(1.1,1)" d="M11.2 0 C14.5 0 15.9 2.6 15.9 5.6 C15.9 7.6 15.5 9.2 14.9 10.4 C14.4 11.4 14.1 12 14.2 12.6 C17.4 13.6 22.4 15.2 22.4 18.2 L22.4 21 L0 21 L0 18.2 C0 15.2 5 13.6 8.2 12.6 C8.3 12 8 11.4 7.5 10.4 C6.9 9.2 6.5 7.6 6.5 5.6 C6.5 2.6 7.9 0 11.2 0 Z" fill="url(#pd)"/><path transform="translate(14.5,1)" d="M11.2 0 C14.5 0 15.9 2.6 15.9 5.6 C15.9 7.6 15.5 9.2 14.9 10.4 C14.4 11.4 14.1 12 14.2 12.6 C17.4 13.6 22.4 15.2 22.4 18.2 L22.4 21 L0 21 L0 18.2 C0 15.2 5 13.6 8.2 12.6 C8.3 12 8 11.4 7.5 10.4 C6.9 9.2 6.5 7.6 6.5 5.6 C6.5 2.6 7.9 0 11.2 0 Z" fill="url(#pb)" stroke="#fff" stroke-width="0.8"/></svg>
<div class="t" style="left:164.90px;top:276px;font-size:8.8px;line-height:8.8px;color:#111;font-weight:700;transform:scaleX(0.855);transform-origin:0 0;">Linked</div>
<div class="r" style="left:190.9px;top:276px;width:8.8px;height:8.9px;background:#0e76b6;border-radius:1px;"></div>
<div class="t" style="left:192.30px;top:278px;font-size:8.2px;line-height:8.2px;color:#fff;font-weight:700;letter-spacing:-0.1px;">in</div>
<svg class="r" style="left:290.3px;top:271px" width="21.5" height="19.6" viewBox="0 2.2 24 19.8"><path fill="#1fa0ea" d="M23.953 4.57a10 10 0 01-2.825.775 4.958 4.958 0 002.163-2.723c-.951.555-2.005.959-3.127 1.184a4.92 4.92 0 00-8.384 4.482C7.69 8.095 4.067 6.13 1.64 3.162a4.822 4.822 0 00-.666 2.475c0 1.71.87 3.213 2.188 4.096a4.904 4.904 0 01-2.228-.616v.06a4.923 4.923 0 003.946 4.827 4.996 4.996 0 01-2.212.085 4.936 4.936 0 004.604 3.417 9.867 9.867 0 01-6.102 2.105c-.39 0-.779-.023-1.17-.067a13.995 13.995 0 007.557 2.209c9.053 0 13.998-7.496 13.998-13.985 0-.21 0-.42-.015-.63A9.935 9.935 0 0024 4.59z"/></svg>
<svg class="r" style="left:399.7px;top:269.6px" width="37.6" height="21.8" viewBox="-0.7 -0.7 37.6 21.8"><defs><linearGradient id="cg" x1="0" y1="0" x2="1" y2="0"><stop offset="0" stop-color="#80bdf2"/><stop offset="0.6" stop-color="#b8ddfd"/><stop offset="1" stop-color="#86c1f3"/></linearGradient></defs><path d="M5.5 20.5 A5.5 5.5 0 1 1 7.21 9.77 A5.2 5.2 0 0 1 14.93 7.51 A9.6 9.6 0 0 1 33.74 11.32 A5 5 0 0 1 31 20.5 Z" fill="url(#cg)" stroke="#6fb1ec" stroke-width="0.9"/><path d="M4 19.7 L32 19.7" stroke="#cfe9ff" stroke-width="0.7"/></svg>
<div class="r" style="left:520.2px;top:269.9px;width:32.6px;height:22.2px;background:#fff;border:0.5px solid #c6c6c6;box-sizing:border-box;box-shadow:0 0.6px 1px rgba(0,0,0,0.18);"></div>
<div class="r" style="left:520.6px;top:270.3px;width:31.8px;height:2px;background:linear-gradient(#f0f0f0,#e0e0e0);"></div>
<div class="r" style="left:521.4px;top:270.7px;width:1.1px;height:1.1px;background:#e66;border-radius:50%;"></div>
<div class="r" style="left:522.8px;top:270.7px;width:1.1px;height:1.1px;background:#eb4;border-radius:50%;"></div>
<div class="r" style="left:524.2px;top:270.7px;width:1.1px;height:1.1px;background:#6b6;border-radius:50%;"></div>
<div class="r" style="left:528px;top:270.7px;width:13px;height:0.8px;background:#aaa;"></div>
<div class="r" style="left:520.6px;top:272.3px;width:31.8px;height:1.8px;background:#dedede;"></div>
<div class="r" style="left:521.2px;top:272.6px;width:2px;height:1.2px;background:#7ab0e8;"></div>
<div class="r" style="left:530.5px;top:272.6px;width:16px;height:1.2px;background:#fff;"></div>
<div class="r" style="left:520.6px;top:274.1px;width:31.8px;height:1.6px;background:#000;"></div>
<div class="r" style="left:521.2px;top:274.5px;width:4px;height:0.7px;background:#a22;"></div>
<div class="r" style="left:520.6px;top:275.7px;width:31.8px;height:1.5px;background:#edf2fa;"></div>
<div class="r" style="left:521.1px;top:275.9px;width:1.6px;height:1.6px;background:#1c4e9e;border-radius:50%;"></div>
<div class="r" style="left:522.3px;top:280px;width:5.8px;height:4.4px;background:linear-gradient(#5c8fd6 0,#5c8fd6 35%,#8fc068 36%,#e8c850 100%);"></div>
<div class="r" style="left:523px;top:285.2px;width:4px;height:0.5px;background:#ccc;"></div>
<div class="r" style="left:530px;top:280.4px;width:5.6px;height:3.8px;background:linear-gradient(#222,#000);"></div>
<div class="r" style="left:534.6px;top:283px;width:0.9px;height:0.9px;background:#c90;"></div>
<div class="r" style="left:538px;top:280.5px;width:3.2px;height:3.4px;background:#c01818;border-radius:50%;"></div>
<div class="r" style="left:541px;top:279.5px;width:2.2px;height:2px;background:#8fd3f5;"></div>
<div class="r" style="left:546px;top:280px;width:3.4px;height:3.4px;background:none;border:0.9px solid #8a9a70;border-radius:50%;box-sizing:border-box;"></div>
<div class="r" style="left:548.8px;top:283px;width:1.7px;height:1.7px;background:#3466b8;border-radius:50%;"></div>
<div class="r" style="left:521px;top:287.2px;width:31px;height:1.6px;background:#eaeaea;"></div>
<div class="r" style="left:521px;top:290.3px;width:5px;height:0.6px;background:#bbb;"></div>
<div class="r" style="left:537px;top:290.3px;width:4px;height:0.6px;background:#bbb;"></div>
<div class="r" style="left:636.25px;top:274px;width:36px;height:13.4px;background:linear-gradient(#e60000,#cc0000);border-radius:1.2px;box-shadow:0 0.5px 0.8px rgba(0,0,0,0.3);"></div>
<div class="t" style="left:637.90px;top:276px;font-size:5.2px;line-height:5.2px;color:#1a0000;font-weight:400;">OTN</div>
<div class="t" style="left:637.90px;top:281px;font-size:5.2px;line-height:5.2px;color:#1a0000;font-weight:400;letter-spacing:0.35px;">Community</div>
<div class="r" style="left:0px;top:336px;width:720px;height:86px;background:#f1f1f1;border-top:1px solid #e0e0e0;box-sizing:border-box;"></div>
<div class="r" style="left:0px;top:337px;width:720px;height:1px;background:#f7f7f7;"></div>
<div class="t" style="left:10.00px;top:343px;font-size:6.3px;line-height:6.3px;color:#444;font-weight:400;transform:scaleX(0.985);transform-origin:0 0;text-decoration:underline;text-decoration-color:#999;">Set Screen Reader Mode On</div>
<div class="t" style="left:10.00px;top:351px;font-size:6.3px;line-height:6.3px;color:#555;font-weight:400;">1.0.7</div>
</div></body></html>
